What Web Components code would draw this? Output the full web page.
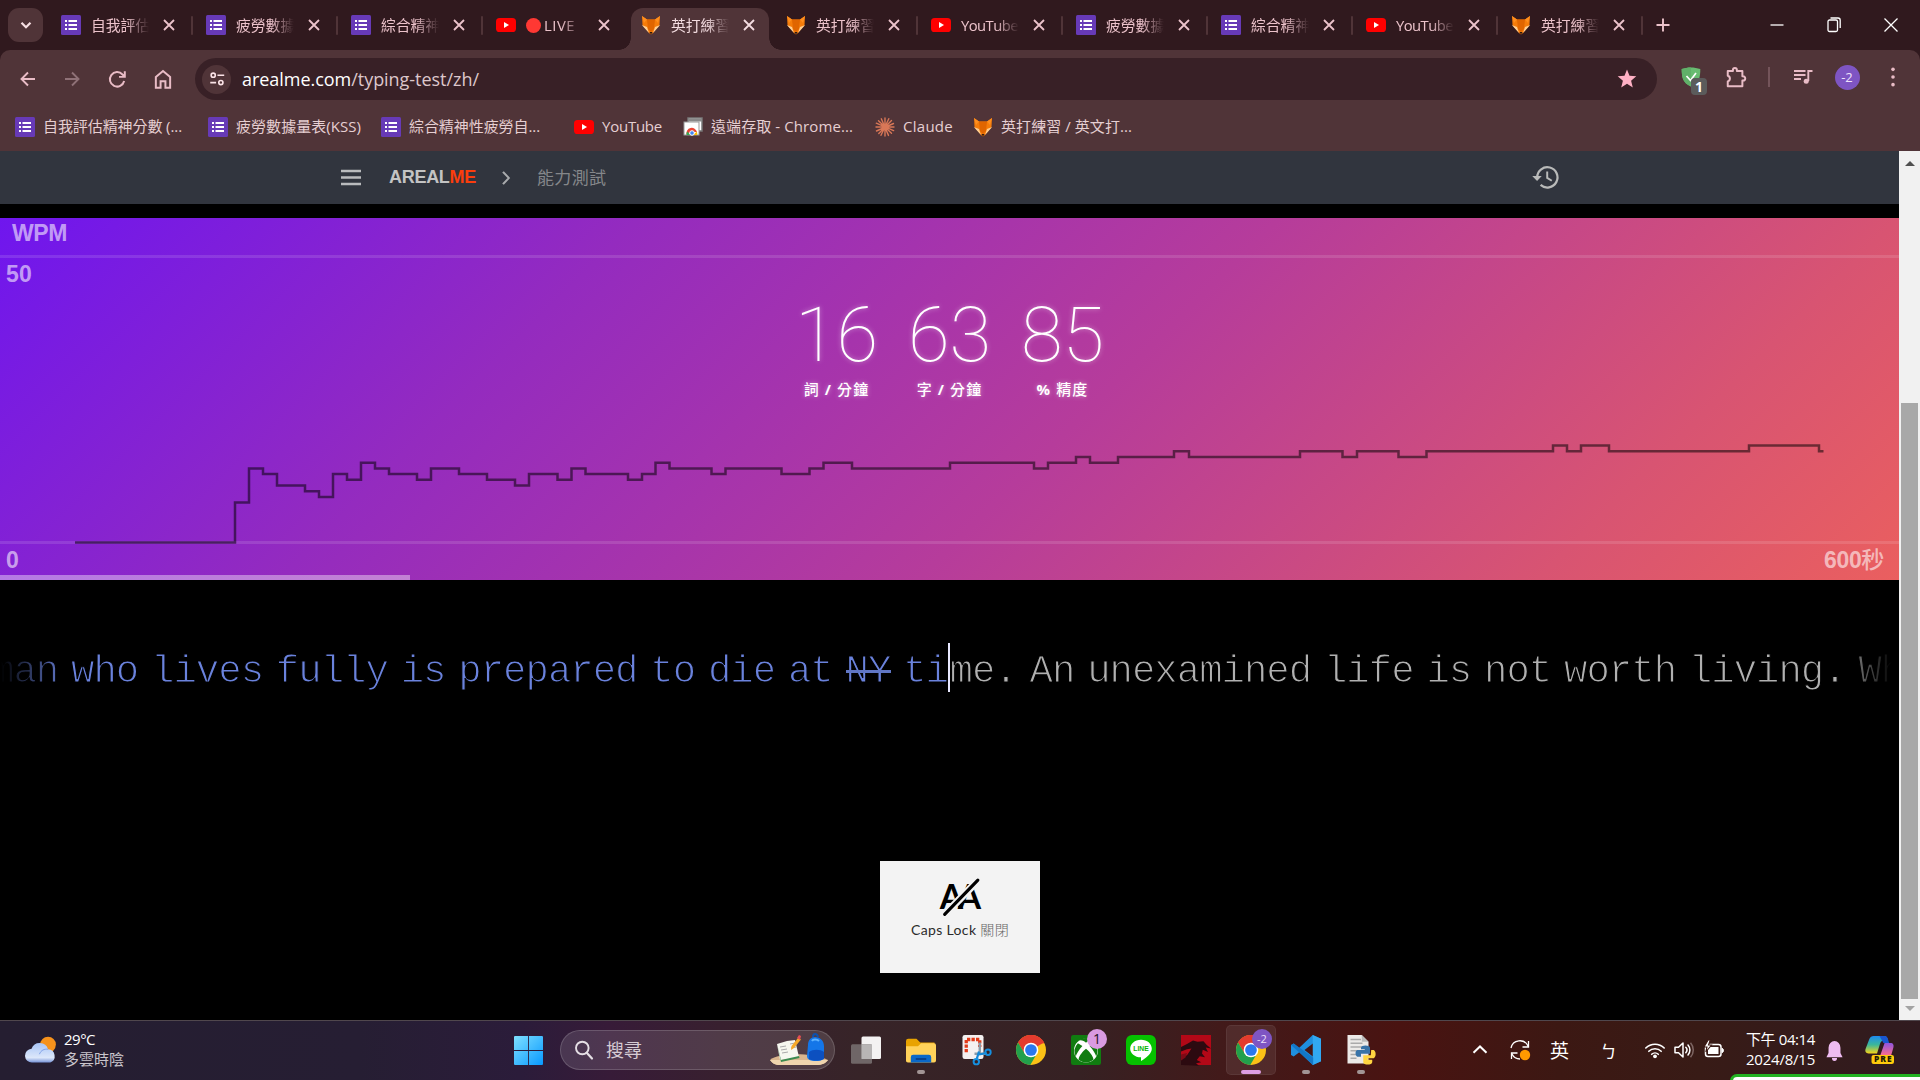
<!DOCTYPE html>
<html lang="zh-Hant">
<head>
<meta charset="utf-8">
<title>英打練習</title>
<style>
html,body{margin:0;padding:0;width:1920px;height:1080px;overflow:hidden;background:#000}
body{font-family:"Open Sans","Noto Sans CJK TC",sans-serif;font-size:15px}
</style>
</head>
<body>
<desktop-screen></desktop-screen>
<script>
const ICONS = {
forms:`<rect width="20" height="20" rx="1.5" fill="#673ab7"/><path d="M4 6h2M4 10h2M4 14h2M7.5 6H16M7.5 10H16M7.5 14H16" stroke="#fff" stroke-width="2"/>`,
youtube:`<rect y="3" width="20" height="14" rx="3.6" fill="#f00"/><path d="M8 7l5 3-5 3z" fill="#fff"/>`,
fox:`<path d="M1 1l5 3.5h8L19 1l-.5 9L12 18l-2 1.500L8 18 1.500 10z" fill="#f57c0a"/><path d="M6 4.500h8L13 14l-3 3-3-3z" fill="#e06500"/><path d="M.8 10L6 12l2 6zM19.200 10L14 12l-2 6z" fill="#ffcf94"/><path d="M1 1l5 3.500L3 8zM19 1l-5 3.500L17 8z" fill="#ff8f1f"/><path d="M8.500 17h3L10 19.500z" fill="#2b1a14"/>`,
remote:`<rect x="5" y="1" width="14" height="13" fill="#fff" stroke="#777" stroke-width="1.500"/><path d="M5 3h14" stroke="#888" stroke-width="3"/><rect x="1" y="5" width="15" height="13" fill="#fff" stroke="#999" stroke-width="1"/><path d="M3.500 17.500a5.300 5.300 0 0 1 10.500-2.500H8.800z" fill="#e94435"/><path d="M3.500 18a5 5 0 0 1 .8-3.600L7.500 18z" fill="#34a853"/><path d="M10 18l3.800-3.500a6 6 0 0 1 .4 3.500z" fill="#fbbc05"/><circle cx="9" cy="16" r="2.300" fill="#4285f4" stroke="#fff"/>`,
claude:`<g stroke="#d97757" stroke-width="1.400" stroke-linecap="round"><path d="M10 1v18M1 10h18M3.500 3.800l13 12.400M3.800 16.600L16.500 3.500M6.300 1.800l7.200 16.600M13.800 1.700L6 18.300M1.300 6.200l17.300 7.400M1.500 14L18.500 6.500"/></g>`,
back:`<path d="M18 10H4.500M11 3.500L4.500 10l6.500 6.500" stroke="currentColor" stroke-width="1.900" fill="none"/>`,
forward:`<path d="M3 10h13M10 3.500l6.500 6.500-6.500 6.500" stroke="currentColor" stroke-width="1.900" fill="none"/>`,
reload:`<path d="M17.300 11.500A6.900 6.900 0 1 1 15.700 5.200L17.700 7.200M17.900 2.200v5.300h-5.500" stroke="currentColor" stroke-width="1.900" fill="none"/>`,
home:`<path d="M3.500 8.200L10 2.800l6.500 5.400V18h-4.300v-6H7.800v6H3.500z" stroke="currentColor" stroke-width="1.800" fill="none"/>`,
tune:`<g stroke="currentColor" stroke-width="1.800" fill="none"><circle cx="5.800" cy="5.800" r="2.300"/><path d="M10.500 5.800H18M2.500 14H9"/><circle cx="14.300" cy="14" r="2.300"/></g>`,
star:`<path d="M10 .6l2.500 6.200 6.800.5-5.200 4.400 1.700 6.700L10 14.800l-5.800 3.600 1.700-6.700L.7 7.300l6.800-.5z" fill="#ffb1c5"/>`,
shield:`<path d="M10 .5c3 0 6.500.7 9.300 1.500 0 8-1 14-9.300 17.500C1.700 16 .7 10 .7 2 3.500 1.200 7 .5 10 .5z" fill="#68bc71"/><path d="M10 .5v19C1.700 16 .7 10 .7 2 3.500 1.200 7 .5 10 .5z" fill="#60b069"/><path d="M5.500 9l4 4.500L15 6" stroke="#fff" stroke-width="1.700" fill="none"/>`,
puzzle:`<path d="M2.500 4.500h4.700V3.600a1.800 1.800 0 0 1 3.600 0v.9h5v4.900h.7a1.900 1.900 0 0 1 0 3.800h-.7v5.300H2.500V14a2.700 2.700 0 0 0 0-5.200z" stroke="currentColor" stroke-width="1.800" stroke-linejoin="round" fill="none"/>`,
playlist:`<path d="M1 4h11.500M1 8h11.500M1 12h7" stroke="currentColor" stroke-width="1.900"/><path d="M15.300 14V4H19.500" stroke="currentColor" stroke-width="1.900" fill="none"/><circle cx="13.200" cy="14.300" r="2.500" fill="currentColor"/>`,
dots:`<g fill="currentColor"><circle cx="10" cy="1.500" r="2"/><circle cx="10" cy="10" r="2"/><circle cx="10" cy="18.500" r="2"/></g>`,
close:`<path d="M5 5l10 10M15 5L5 15" stroke="currentColor" stroke-width="1.800"/>`,
closewin:`<path d="M3.500 3.500l13 13M16.500 3.500l-13 13" stroke="#fff" stroke-width="1.300"/>`,
restore:`<path d="M4 6.500a1.500 1.500 0 0 1 1.500-1.500H12a1.500 1.500 0 0 1 1.500 1.500V15a1.500 1.500 0 0 1-1.500 1.500H5.500A1.500 1.500 0 0 1 4 15zM6.500 3h7.500a2.200 2.200 0 0 1 2.200 2.200V13" stroke="#fff" stroke-width="1.300" fill="none"/>`,
min:`<path d="M3.500 10h13" stroke="#fff" stroke-width="1.300"/>`,
plus:`<path d="M10 3.500v13M3.500 10h13" stroke="currentColor" stroke-width="1.900"/>`,
down:`<path d="M5.500 7.800l4.500 4.500 4.500-4.500" stroke="currentColor" stroke-width="2.200" fill="none"/>`,
menu:`<path d="M0 3h20M0 9.500h20M0 16h20" stroke="#b9bbbd" stroke-width="2.300"/>`,
right:`<path d="M7 3.300l5.800 6.700L7 16.700" stroke="#a9abad" stroke-width="2.100" fill="none"/>`,
history:`<path d="M4 10.200a7.800 7.800 0 1 1 2.600 5.900" stroke="#b9bab9" stroke-width="1.700" fill="none"/><path d="M.2 9.300h7.300L3.900 13z" fill="#b9bab9"/><path d="M11.700 5.700v5l3.500 2.200" stroke="#b9bab9" stroke-width="1.500" fill="none"/>`,
caps:`<text x=".4" y="15.600" font-family="Lato" font-weight="700" font-size="16" textLength="19.600">AA</text><path d="M3 18L18.700 2" stroke="#f3f3f3" stroke-width="3.600"/><path d="M2.700 18.300L18.500 2" stroke="#000" stroke-width="1.500" stroke-linecap="round"/>`,
weather:`<defs><linearGradient id="a" x2="0" y2="1"><stop stop-color="#a8c5f7"/><stop offset=".75" stop-color="#dce7fa"/><stop offset="1" stop-color="#7794d8"/></linearGradient></defs><circle cx="14.400" cy="6" r="4.900" fill="#f6921c"/><path d="M4.500 17.200a4.300 4.300 0 0 1-.4-8.600 5.400 5.400 0 0 1 10.300.3 4.300 4.300 0 0 1 1.400 8.300z" fill="url(#a)"/><path d="M9 12c1-2.500 3-3.400 5.400-3.100" stroke="#7e9fe6" stroke-width=".6" fill="none"/>`,
win:`<defs><linearGradient id="w" x2="1" y2="1"><stop stop-color="#7fe0ff"/><stop offset="1" stop-color="#0899ff"/></linearGradient></defs><path d="M.5 0H9.700V9.700H0V.5zM10.300 0h9.200l.5.500v9.200h-9.700zM0 10.300h9.700V20H.5l-.5-.5zM10.300 10.300H20v9.200l-.5.500h-9.200z" fill="url(#w)"/>`,
search:`<circle cx="8.300" cy="8" r="6.300" stroke="#e5dfe5" stroke-width="1.900" fill="none"/><path d="M12.700 12.800L18 18.500" stroke="#e5dfe5" stroke-width="2.200" stroke-linecap="round"/>`,
task:`<rect x="7" y="1" width="13" height="15" rx="1" fill="#f4f2f2"/><rect x="0" y="6.200" width="14" height="13" rx="1" fill="#77706f" opacity=".88"/><path d="M7 6.200h7V16H7z" fill="#b8b5b5"/>`,
folder:`<path d="M0 4a1.500 1.500 0 0 1 1.500-1.500H7l2.500 2.500H19v12.500H0z" fill="#e8a300"/><path d="M0 7.500h8l2-2h8.700A1.300 1.300 0 0 1 20 6.800V17a1.300 1.300 0 0 1-1.300 1.300H1.300A1.300 1.300 0 0 1 0 17z" fill="#ffd25a"/><path d="M3.200 18.300v-3.500a1.600 1.600 0 0 1 1.600-1.600h10.400a1.600 1.600 0 0 1 1.600 1.600v3.500z" fill="#0a68c8"/><path d="M6.500 16h7" stroke="#063f88" stroke-width="1.200"/>`,
snip:`<rect x="1" y="0" width="14" height="16" rx="1.500" fill="#f4f1f1"/><path d="M3.500 11.500V3h9v5" fill="none" stroke="#e23a19" stroke-width="2.200" stroke-dasharray="2.200 .8"/><path d="M12.500 5v8M9 12.500h8" stroke="#8a9ba8" stroke-width="1.600"/><path d="M12 11l-1.500 5M12 13l5-1" stroke="#1488d8" stroke-width="1.500"/><circle cx="10.200" cy="17.800" r="1.800" fill="none" stroke="#1590e0" stroke-width="1.300"/><circle cx="18" cy="11.500" r="1.800" fill="none" stroke="#1590e0" stroke-width="1.300"/>`,
chrome:`<circle cx="10" cy="10" r="10" fill="#fbc116"/><path d="M10 10L1.340 5A10 10 0 0 1 18.660 5z" fill="#e33b2e"/><path d="M10 5.500h8.930A10 10 0 0 0 1.340 5L5.500 12z" fill="#e33b2e"/><path d="M1.340 5A10 10 0 0 0 9.500 20l4.500-7.700-8 .3z" fill="#22a04c"/><circle cx="10" cy="10" r="4.900" fill="#fff"/><circle cx="10" cy="10" r="3.900" fill="#2b78ee"/>`,
xbox:`<rect width="20" height="20" rx="1.500" fill="#107c10"/><circle cx="10" cy="10.300" r="8" fill="#fff"/><path d="M5.400 3.700C7 3.200 9 4.200 10 5.200c1-1 3-2 4.600-1.500C12.500 1.500 7.500 1.500 5.400 3.700zM5 16.300C5.600 13.500 8 10.800 10 9.200c2 1.600 4.400 4.300 5 7.100-2.800 2.600-7.200 2.600-10 0zM4.600 5.500L7.600 7.300C5.300 9.800 3.600 12.500 3.200 14.400A8 8 0 0 1 4.600 5.500zM15.400 5.500L12.400 7.300c2.300 2.500 4 5.200 4.400 7.100a8 8 0 0 0-1.400-8.900z" fill="#107c10"/>`,
line:`<rect width="20" height="20" rx="4" fill="#06c100"/><path d="M10 3.200c4.200 0 7.200 2.600 7.200 6 0 3-3.300 6-7.200 8.100v-2.400c-4.200 0-7.200-2.500-7.200-5.700s3-6 7.200-6z" fill="#fff"/><text x="4.800" y="10.900" font-family="Liberation Sans" font-weight="700" font-size="4.500" textLength="10.400" fill="#06b400">LINE</text>`,
red:`<rect width="20" height="20" fill="#b30817"/><path d="M0 20V15l4-1.500 3-4.500-3 .5L0 11V8l4-2 4-2.300 3 .8 4-.3 2 2.300 3 2.500-3.500-.6 1.500 3-3.500-1.500-.5 2.500 2 2.500-3.500-.8-2 2.500 3 1.500-3.500.7 2 1.700z" fill="#2c0a10"/><path d="M0 13l4-1-1 3-3 2z" fill="#7e0a16"/>`,
vscode:`<path d="M14.500 0L20 2.500v15L14.500 20 5.500 11.500 1.800 14.300 0 13.400V6.600l1.800-.9 3.700 2.800zM14.800 5.500L9 10l5.800 4.500z" fill="#1f8fdf" fill-rule="evenodd"/><path d="M14.500 0L20 2.500v15L14.500 20z" fill="#31a8f2"/><path d="M0 6.600l1.800-.9 13 9.300v5z" fill="#0f6fc0" opacity=".75"/>`,
python:`<path d="M1 0h9.500L15 4.500V19H1z" fill="#eceae8"/><path d="M3 3h7M3 5.500h8M3 8h8M3 10.500h6M3 13h5M3 15.500h4" stroke="#aaa" stroke-width="1"/><path d="M10.500 0v4.500H15z" fill="#bbb"/><path d="M10 8.500c0-2 6-2 6 0v4h-6v2H7.500c-1.500-1-1.500-4 0-4.500h5V9.500H10z" fill="#3873a8"/><path d="M16.800 10h1.700c1.700 1 1.700 4.500 0 5.500h-4v1h3V18c0 2.300-6 2.300-6 0v-4.500h5z" fill="#ffd541"/>`,
cheq:`<path d="M3.500 12.800L10 6.500l6.500 6.300" stroke="#fff" stroke-width="2" fill="none"/>`,
sync:`<path d="M1 8a9 9 0 0 1 17-2M18.500 1v6h-6M1.500 19v-6h6M2 14a9 9 0 0 0 8 5" stroke="#fff" stroke-width="1.300" fill="none"/><circle cx="15" cy="15" r="5.200" fill="#ff9900"/>`,
wifi:`<path d="M.8 8a13 13 0 0 1 18.400 0M3.800 11.300a8.700 8.700 0 0 1 12.400 0M6.700 14.300a4.700 4.700 0 0 1 6.600 0" stroke="#fff" stroke-width="1.600" fill="none" stroke-linecap="round"/><circle cx="10" cy="16.300" r="1.900" fill="#fff"/>`,
volume:`<path d="M1 7.300h3.500L9 3v14l-4.500-4.300H1z" stroke="#fff" stroke-width="1.500" fill="none" stroke-linejoin="round"/><path d="M11.800 7.300a4 4 0 0 1 0 5.400M14 5a7.500 7.500 0 0 1 0 10" stroke="#fff" stroke-width="1.500" fill="none" stroke-linecap="round"/><path d="M16.500 2.700a11 11 0 0 1 0 14.600" stroke="#7d6562" stroke-width="1.500" fill="none"/>`,
battery:`<rect x="1.500" y="4.500" width="15.500" height="12" rx="2.500" stroke="#fff" stroke-width="1.500" fill="none"/><path d="M4 7h10.500v7H4z" fill="#fff"/><path d="M18 8.300c2 .7 2 3.700 0 4.400z" fill="#fff" stroke="#fff"/><path d="M4.200 0L0 7h3L1.800 12 7.500 5h-3L6.300 0z" fill="#fff" stroke="#3b1813" stroke-width="1.100"/>`,
bell:`<path d="M10 0a7 7 0 0 1 7 7v5.500l2.500 4.500H.5L3 12.500V7a7 7 0 0 1 7-7zM7 18h6a3 3 0 0 1-6 0z" fill="#efbcf2"/>`,
copilot:`<defs><linearGradient id="c" x2="0" y2="1"><stop stop-color="#1d8bf0"/><stop offset=".5" stop-color="#3bb79a"/><stop offset="1" stop-color="#f5d419"/></linearGradient><linearGradient id="d" x2="0" y2="1"><stop stop-color="#8d55e0"/><stop offset="1" stop-color="#ff6d8c"/></linearGradient></defs><path d="M6 0h7c2 0 2.500 1.500 3 3.200H13c-1.500 0-2.300 1-2.800 2.800L8.300 12.500H2.500C.5 12.500-.2 11 .5 9L3 2.200C3.600.6 4.500 0 6 0z" fill="url(#c)"/><path d="M10 0h3.500c2 0 2.300 2 2.700 3.500l.5 1.500h-4z" fill="#1956d1"/><path d="M13.500 5h4c2 0 2.600 1.500 2 3.500L18 14h-7.500z" fill="url(#d)"/><rect x="4.500" y="13.500" width="15.500" height="6.500" rx="1.500" fill="#ffcb0c"/><text x="6.300" y="18.800" font-family="Open Sans" font-weight="800" font-size="5.800" textLength="12" fill="#231c05">PRE</text>`,
school:`<path d="M0 26c8-7 40-8 58 0-2 3-6 5-12 5H10c-5 0-8-2-10-5z" fill="#d9b58d"/><path d="M0 26h58c-2 3-6 5-12 5H10c-5 0-8-2-10-5z" fill="#efd5ae"/><path d="M7 10l10-3 8-1 4 17-10 2-9 1z" fill="#f6f7ef"/><path d="M7 10l4 16 18-4 .5 2L11 28z" fill="#3b8b4f"/><path d="M10 13l6-1M11 16l6-1M12 19l6-1M20 10l5-1M21 14l5-1" stroke="#aaa"/><path d="M28 4l3 1.500L24 14l-3 2 .5-4z" fill="#f7a928"/><path d="M27 4l2-3 2 1-1 4z" fill="#e64f54"/><path d="M38 11c0-5 3-8 7-8s9 3 9 9v10c0 4-3 5-8 5s-9-1-9-5z" fill="#1476e8"/><path d="M43 3c0-4 4-4 5 0" stroke="#0c51ae" stroke-width="2" fill="none"/><path d="M39 18c4-3 11-3 15 0v7c-4 2-11 2-15 0z" fill="#0c50c0"/><path d="M42 7c1-2 5-2 7 0" stroke="#5eb3ff" stroke-width="2" fill="none"/>`
};

class UiIcon extends HTMLElement{
  connectedCallback(){
    const n=this.getAttribute('name'),s=this.getAttribute('size')||20;
    const vb=n==='school'?'0 0 58 32':'0 0 20 20';
    const w=this.getAttribute('w')||s,h=this.getAttribute('h')||s;
    this.attachShadow({mode:'open'}).innerHTML=`<style>:host{display:block;flex:none;width:${w}px;height:${h}px}svg{display:block;overflow:visible}</style><svg width="${w}" height="${h}" viewBox="${vb}" preserveAspectRatio="none">${ICONS[n]}</svg>`;
  }
}
customElements.define('ui-icon',UiIcon);

/* One line of text spread over a fixed width by its letter spacing. */
class FitText extends HTMLElement{
  connectedCallback(){
    const w=+this.getAttribute('w');
    const r=this.attachShadow({mode:'open'});
    r.innerHTML=`<style>:host{display:block;flex:none;width:${w}px;white-space:nowrap}span{display:inline-block}</style><span><slot></slot></span>`;
    const sp=r.querySelector('span');
    const n=[...this.textContent].length;
    sp.style.letterSpacing=((w-sp.getBoundingClientRect().width)/n).toFixed(3)+'px';
  }
}
customElements.define('fit-text',FitText);

const define=(name,html)=>customElements.define(name,class extends HTMLElement{
  connectedCallback(){
    if(this.shadowRoot)return;
    const t=document.createElement('template');
    t.innerHTML=typeof html==='function'?html(this):html;
    this.attachShadow({mode:'open'}).append(t.content.cloneNode(true));
  }
});

define('browser-tab',el=>`<style>
:host{display:block;width:138px;height:42px;margin-right:7px;flex:none;position:relative;color:#ecc3cb}
.t{display:flex;align-items:center;height:42px;padding:0 0 8px 10px;box-sizing:border-box;border-radius:12px 12px 0 0;position:relative}
.label{margin-left:10px;width:58px;height:24px;line-height:24px;overflow:hidden;white-space:nowrap;font-size:14.800px;display:flex;align-items:center;-webkit-mask:linear-gradient(90deg,#000 60%,transparent)}
ui-icon.x{margin-left:10px}
.sep{position:absolute;left:140px;top:8px;width:2px;height:19px;border-radius:1px;background:#503438}
:host([active]){color:#f4dde1}
:host([active]) .t{background:#503438}
:host([active]) .t:before,:host([active]) .t:after{content:"";position:absolute;bottom:0;width:12px;height:12px}
:host([active]) .t:before{left:-12px;background:radial-gradient(circle at 0 0,transparent 11.500px,#503438 12px)}
:host([active]) .t:after{right:-12px;background:radial-gradient(circle at 100% 0,transparent 11.500px,#503438 12px)}
</style><div class="t"><ui-icon name="${el.getAttribute('icon')}"></ui-icon><div class="label"><slot></slot></div><ui-icon class="x" name="close" size="20"></ui-icon></div>${el.hasAttribute('nosep')?'':'<div class="sep"></div>'}`);

define('tab-strip',`<style>
:host{display:flex;height:50px;background:#30191e;padding:8px 0 0 8px;box-sizing:border-box;color:#ecc3cb}
.find{flex:none;width:35px;height:34px;border-radius:11px;background:#503438;margin-right:8px;display:grid;place-items:center;color:#f7dfe3}
.plus{margin-left:7px;margin-top:7px}
.win{margin-left:auto;margin-right:19px;display:flex;gap:37px;height:33px;align-items:center}
.dot{width:15px;height:15px;border-radius:50%;background:#ff3833;margin-right:3px;flex:none}
</style><div class="find"><ui-icon name="down" size="20"></ui-icon></div>
<browser-tab icon="forms">自我評估精神</browser-tab><browser-tab icon="forms">疲勞數據量表</browser-tab><browser-tab icon="forms">綜合精神性</browser-tab><browser-tab icon="youtube" nosep><span class="dot"></span><fit-text w="31">LIVE</fit-text></browser-tab><browser-tab icon="fox" active nosep>英打練習</browser-tab><browser-tab icon="fox">英打練習</browser-tab><browser-tab icon="youtube"><fit-text w="57">YouTube</fit-text></browser-tab><browser-tab icon="forms">疲勞數據量表</browser-tab><browser-tab icon="forms">綜合精神性</browser-tab><browser-tab icon="youtube"><fit-text w="57">YouTube</fit-text></browser-tab><browser-tab icon="fox">英打練習</browser-tab>
<ui-icon class="plus" name="plus"></ui-icon>
<div class="win"><ui-icon name="min"></ui-icon><ui-icon name="restore"></ui-icon><ui-icon name="closewin"></ui-icon></div>`);

define('tool-bar',`<style>
:host{display:block;background:#30191e;color:#e9bcc6}
.bar{background:#503438;border-radius:10px 10px 0 0;height:58px;box-sizing:border-box;padding:8px 0 8px 17px;display:flex}
.row{height:42px;display:flex;align-items:center;flex:none}
.nav{gap:24.500px;margin-right:21.500px}
.omni{width:1462px;border-radius:21px;background:#382026;box-sizing:border-box;padding:0 20px 0 7px;margin-right:24px}
.info{width:29px;height:29px;border-radius:50%;background:#503438;display:grid;place-items:center;margin-right:11px;color:#fbe3e7}
.url{font-size:18px;color:#ddc7cb}
b{font-weight:400;color:#fff}
.omni ui-icon[name=star]{margin-left:auto}
.shield{position:relative;margin-right:24px}
.badge{position:absolute;left:10px;top:11px;width:16px;height:17px;border-radius:4px;background:#5b5b5b;color:#fff;font:bold 14px/17px "Open Sans";text-align:center}
.sep{width:1.500px;height:20px;background:#74545a;margin:0 23px 0 21px}
.ava{width:25px;height:25px;border-radius:50%;background:#7e55c3;color:#efe4fb;font-size:13px;line-height:25px;text-align:center;margin:0 24px 0 22px}
.r{margin-top:-2px}
</style><div class="bar"><div class="row nav"><ui-icon name="back"></ui-icon><ui-icon name="forward" style="color:#8f7177"></ui-icon><ui-icon name="reload" size="21"></ui-icon><ui-icon name="home" size="22"></ui-icon></div>
<div class="row omni"><div class="info"><ui-icon name="tune" size="18"></ui-icon></div><fit-text class="url" w="237"><b>arealme.com</b>/typing-test/zh/</fit-text><ui-icon name="star"></ui-icon></div>
<div class="row r"><div class="shield"><ui-icon name="shield"></ui-icon><div class="badge">1</div></div><ui-icon name="puzzle" size="22"></ui-icon><div class="sep"></div><ui-icon name="playlist"></ui-icon><div class="ava">-2</div><ui-icon name="dots" size="18"></ui-icon></div></div>`);

define('book-mark',el=>`<style>:host{display:flex;align-items:center;flex:none;gap:8px;height:24px}fit-text{padding-bottom:2px}</style><ui-icon name="${el.getAttribute('icon')}"></ui-icon><fit-text w="${el.getAttribute('w')}">${el.textContent}</fit-text>`);
define('bookmark-bar',`<style>:host{display:flex;background:#503438;height:43px;padding:6.500px 0 0 15px;box-sizing:border-box;color:#e6cfd2;font-size:15px}</style>
<book-mark icon="forms" w="139" style="width:193px">自我評估精神分數 (...</book-mark><book-mark icon="forms" w="125" style="width:173px">疲勞數據量表(KSS)</book-mark><book-mark icon="forms" w="131" style="width:193px">綜合精神性疲勞自...</book-mark><book-mark icon="youtube" w="60" style="width:109px">YouTube</book-mark><book-mark icon="remote" w="142" style="width:192px">遠端存取 - Chrome...</book-mark><book-mark icon="claude" w="50" style="width:98px">Claude</book-mark><book-mark icon="fox" w="131">英打練習 / 英文打...</book-mark>`);

define('site-nav',`<style>
:host{display:flex;align-items:center;height:53px;background:#31353e;padding-left:341px;box-sizing:border-box}
.logo{font:bold 18px "Liberation Sans";color:#c3c3c3;margin:0 20px 0 28px}
.logo b{color:#fc3d0c}
.crumb{font-size:17px;color:#85878a;margin-left:21px;padding-bottom:2px}
.h{margin-left:925.500px;margin-bottom:1.500px}
</style><ui-icon name="menu"></ui-icon><fit-text class="logo" w="87">AREAL<b>ME</b></fit-text><ui-icon name="right" w="20" h="18"></ui-icon><fit-text class="crumb" w="69.500">能力測試</fit-text><ui-icon class="h" name="history" size="26"></ui-icon>`);

const levels=[[75,0],[235,7],[249,13],[263,12],[277,10],[305,9],[319,8],[333,12],[347,11],[361,14],[375,13],[389,12],[417,11],[431,13],[459,12],[487,11],[515,10],[529,12],[557.5,11],[571.5,13],[585.5,12],[628,11],[642,12],[655.5,14],[669.5,13],[711.5,12],[725.5,13],[781.5,12],[809.5,13],[823.5,14],[852,13],[950,14],[1034,13],[1048,14],[1076,15],[1090,14],[1118,15],[1174,16],[1189,15],[1300,16],[1342.5,15],[1357,16],[1398.5,15],[1426.5,16],[1553,17],[1567,16],[1581,17],[1609,16],[1749,17],[1819,16]];
let trace='';
levels.forEach(([x,l],i)=>{trace+=(i?'H':'M')+x+(i?'V':' ')+(324.5-l*5.7).toFixed(1)});
trace+='H1823.5';

define('score-item',`<style>:host{display:flex;flex-direction:column;align-items:center;width:113px;color:#fff;text-shadow:0 0 5px rgba(255,255,255,.45)}
.n{font:100 76px/90px Roboto;height:90px}.l{font:500 15px/22px "Open Sans","Noto Sans CJK TC";letter-spacing:1.100px;margin-top:-2px;white-space:nowrap}</style><div class="n"><slot name="n"></slot></div><div class="l"><slot></slot></div>`);

define('wpm-chart',`<style>
:host{display:grid;height:362px;background:linear-gradient(135deg,#6f16ee 0%,#942bbf 28.300%,#b63c9b 56.600%,#d85472 84%,#ea5f5f 100%);font:bold 23px/28px "Liberation Sans","Noto Sans CJK TC";color:rgba(255,255,255,.58)}
:host>*{grid-area:1/1}
svg{display:block}
.labels{display:flex;flex-direction:column;height:362px}
.a{margin:1px 0 0 12px}.b{margin:13px 0 0 6px}
.c{display:flex;justify-content:space-between;margin:258px 15px 0 6px}
.c fit-text+fit-text{font-weight:500}
.bar{height:5px;width:410px;background:rgba(255,255,255,.4);margin-top:auto}
.scores{display:flex;justify-content:center;padding-top:71.500px}
.scores b{font-weight:700}
</style><svg width="1899" height="362"><path d="M0 38.500H1899M0 324.500H1899" stroke="#fff" stroke-opacity=".12" stroke-width="3"/><path d="${trace}" fill="none" stroke="#000" stroke-opacity=".52" stroke-width="2.500"/></svg>
<div class="labels"><fit-text class="a" w="55">WPM</fit-text><fit-text class="b" w="26">50</fit-text><div class="c"><fit-text w="13">0</fit-text><fit-text w="60"><b>600</b>秒</fit-text></div><div class="bar"></div></div>
<div class="scores"><score-item><span slot="n">16</span>詞 <b>/</b> 分鐘</score-item><score-item><span slot="n">63</span>字 <b>/</b> 分鐘</score-item><score-item><span slot="n">85</span><b>%</b> 精度</score-item></div>`);

define('typing-line',`<style>
:host{display:flex;height:58px;margin-top:63px;font:39px/58px "Liberation Mono";letter-spacing:-1px;word-spacing:-9.600px;white-space:pre;-webkit-text-stroke:1.200px #000;-webkit-mask:linear-gradient(90deg,transparent 1px,#000 68px,#000 1838px,transparent 1892px);overflow:hidden}
.l,.r{display:flex;flex:none}
.l{justify-content:flex-end;color:#6a82dc;width:948px}
.caret{flex:none;width:1.500px;height:49px;background:#e8e8ff}
.r{color:#b0b0b0;width:949.500px}
s{text-decoration:none;position:relative}
s:after{content:"";position:absolute;left:0;bottom:21px;width:45px;height:3px;background:#6076c4}
</style><div class="l"><span>man who lives fully is prepared to die at <s>NY</s> ti</span></div><div class="caret"></div><div class="r"><span>me. An unexamined life is not worth living. Wh</span></div>`);

define('caps-toast',`<style>:host{display:flex;flex-direction:column;align-items:center;width:160px;height:112px;background:#f3f3f3;color:#2b2b2b;padding-top:15px;box-sizing:border-box;font:14px/20px Lato,"Noto Sans CJK TC"}fit-text{margin-top:2px}ui-icon{margin-right:1px}i{font-style:normal;font-weight:300;color:#666}</style><ui-icon name="caps" size="42"></ui-icon><fit-text w="98">Caps Lock <i>關閉</i></fit-text>`);

define('scroll-bar',`<style>:host{display:flex;flex-direction:column;align-items:center;justify-content:space-between;width:21px;height:869px;background:#f1f1f1}
i{width:0;border:5px solid transparent}.u{border-top:0;border-bottom-color:#505050;margin-top:10px}.d{border-bottom:0;border-top-color:#a3a3a3;margin-bottom:9px}
.t{width:17px;height:596px;background:#a8a8a8;margin-top:auto;margin-bottom:7px}</style><i class="u"></i><div class="t"></div><i class="d"></i>`);

define('task-app',el=>`<style>
:host{display:flex;flex-direction:column;align-items:center;flex:none;position:relative;width:50px;height:50px;margin-right:5px;border-radius:5px;box-sizing:border-box;padding-top:10px}
:host([active]){background:rgba(255,255,255,.08);box-shadow:inset 0 0 0 1px rgba(255,255,255,.06)}
.dot{width:8px;height:4px;border-radius:2px;background:#a29595;margin-top:5px}
:host([active]) .dot{width:20px;background:#dd9ee3}
.badge{position:absolute;left:26px;top:4px;width:20px;height:20px;border-radius:50%;background:#d99ae1;color:#1e1122;font:14px/20px "Open Sans";text-align:center}
.v{background:#7e55c3;color:#eadffa;font-size:11px}
</style><ui-icon name="${el.getAttribute('icon')}" size="30"></ui-icon>${el.hasAttribute('run')?'<div class="dot"></div>':''}${el.hasAttribute('badge')?`<div class="badge ${el.hasAttribute('active')?'v':''}">${el.getAttribute('badge')}</div>`:''}`);

define('task-bar',`<style>
:host{display:flex;position:relative;height:60px;box-sizing:border-box;border-top:1px solid #50474d;background:linear-gradient(90deg,#251e31 0,#261e33 360px,#2b1c3a 520px,#371b38 610px,#38202f 720px,#372428 860px,#362123 1080px,#421a1a 1220px,#491311 1400px,#3c1813 1560px,#381b16 1700px,#301b20 1920px);color:#fff;overflow:hidden;font-size:15px}
.w{display:flex;padding:8px 0 0 25px;gap:6px;width:490px;box-sizing:border-box}
.w ui-icon{margin-top:6px}
.wt{line-height:20px;margin-left:1px}
.wt fit-text+fit-text{color:#c9c5cc}
.start{margin:15px 17px 0 24px}
.search{width:275px;height:40px;margin:9px 6px 0 0;border-radius:20px;box-sizing:border-box;border:1px solid rgba(255,255,255,.16);background:rgba(255,255,255,.12);display:flex;align-items:center;padding:0 6px 0 13px;font-size:18px;color:#d6cbd3}
.search fit-text{margin-left:12px;padding-bottom:2px}.search ui-icon[name=school]{margin-left:auto}
.apps{display:flex;padding-top:4px}
.tray{display:flex;align-items:center;height:58px;margin-left:79px}
.clock{font:15px/20px "Open Sans","Noto Sans CJK TC";padding-bottom:3px}
.pop{position:absolute;left:1730px;top:53px;width:194px;height:20px;background:#fff;border:3px solid #22b422;border-radius:7px 0 0 0;box-sizing:border-box}
</style>
<div class="w"><ui-icon name="weather" w="32" h="32"></ui-icon><div class="wt"><fit-text w="31">29°C</fit-text><fit-text w="60">多雲時陰</fit-text></div></div>
<ui-icon class="start" name="win" size="29"></ui-icon>
<div class="search"><ui-icon name="search"></ui-icon><fit-text w="36">搜尋</fit-text><ui-icon name="school" w="58" h="32"></ui-icon></div>
<div class="apps"><task-app icon="task"></task-app><task-app icon="folder" run></task-app><task-app icon="snip"></task-app><task-app icon="chrome"></task-app><task-app icon="xbox" badge="1"></task-app><task-app icon="line"></task-app><task-app icon="red"></task-app><task-app icon="chrome" active run badge="-2"></task-app><task-app icon="vscode" run></task-app><task-app icon="python" run></task-app></div>
<div class="tray"><ui-icon name="cheq"></ui-icon><ui-icon name="sync" style="margin-left:20px"></ui-icon><fit-text w="19" style="font-size:19px;margin-left:20px">英</fit-text><fit-text w="17" style="font-size:17px;margin-left:31px">ㄅ</fit-text><ui-icon name="wifi" style="margin-left:28px"></ui-icon><ui-icon name="volume" style="margin-left:9px"></ui-icon><ui-icon name="battery" style="margin-left:10px"></ui-icon><div class="clock" style="margin-left:22px"><fit-text w="69">下午 04:14</fit-text><fit-text w="69">2024/8/15</fit-text></div><ui-icon name="bell" w="17" h="19" style="margin-left:11px"></ui-icon><ui-icon name="copilot" w="29" h="28" style="margin-left:22px"></ui-icon></div>
<div class="pop"></div>`);

define('desktop-screen',`<style>
:host{display:flex;flex-direction:column;width:1920px;height:1080px;overflow:hidden}
.view{display:flex;height:869px;background:#000}
.page{display:flex;flex-direction:column;width:1899px;flex:none;overflow:hidden}
wpm-chart{margin-top:14px;flex:none}typing-line{flex:none}
caps-toast{margin:160px 0 0 880px}
</style><tab-strip></tab-strip><tool-bar></tool-bar><bookmark-bar></bookmark-bar>
<div class="view"><div class="page"><site-nav></site-nav><wpm-chart></wpm-chart><typing-line></typing-line><caps-toast></caps-toast></div><scroll-bar></scroll-bar></div>
<task-bar></task-bar>`);
</script>
</body>
</html>
